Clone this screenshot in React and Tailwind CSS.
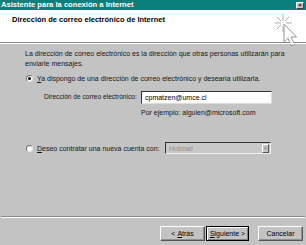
import React from "react";

function WizardIcon() {
  return (
    <svg width="26" height="38" viewBox="0 0 26 38" className="overflow-visible">
      {/* sparkle */}
      <g stroke="#9a9a9a" strokeWidth="0.8">
        <line x1="9" y1="1" x2="9" y2="8" />
        <line x1="9" y1="13" x2="9" y2="19" />
        <line x1="1" y1="10" x2="7" y2="10" />
        <line x1="12" y1="10" x2="18" y2="10" />
        <line x1="3" y1="4" x2="7" y2="8" />
        <line x1="15" y1="4" x2="11" y2="8" />
        <line x1="3" y1="16" x2="7" y2="12" />
      </g>
      {/* arrow cursor */}
      <path
        d="M10 11 L10 29 L14 25 L17.5 33 L20.5 31.5 L17 24 L22.5 24 Z"
        fill="#ffffff"
        stroke="#8a8a8a"
        strokeWidth="0.9"
        strokeLinejoin="miter"
      />
    </svg>
  );
}

function Radio({ checked }) {
  return (
    <span className="relative w-[7px] h-[7px] rounded-full bg-white border border-t-[#707070] border-l-[#707070] border-r-[#e8e8e8] border-b-[#e8e8e8] flex items-center justify-center shrink-0">
      {checked && <span className="w-[3px] h-[3px] rounded-full bg-black" />}
    </span>
  );
}

function Button({ children, isDefault }) {
  return (
    <div
      className={`h-[15px] flex items-center justify-center text-[7px] text-black bg-[#c3c3c3] ${
        isDefault
          ? "border border-black shadow-[inset_1px_1px_0_#fff,inset_-1px_-1px_0_#808080]"
          : "border border-t-white border-l-white border-r-[#555] border-b-[#555] shadow-[inset_-1px_-1px_0_#909090]"
      }`}
    >
      {children}
    </div>
  );
}

export default function App() {
  return (
    <div className="w-[306px] h-[245px] bg-[#c3c3c3] flex flex-col overflow-hidden font-['Liberation_Sans',Arial,sans-serif] leading-none select-none">
      {/* title bar */}
      <div className="h-[10px] bg-[#0a7f7c] flex items-center justify-between pl-[1px] pr-[2px]">
        <span className="text-white font-bold text-[7.6px]">
          Asistente para la conexión a Internet
        </span>
        <span className="w-[8px] h-[7px] bg-[#c3c3c3] border-t border-l border-white border-r border-b border-r-[#444] border-b-[#444] flex items-center justify-center text-[6px] font-bold text-black">
          ×
        </span>
      </div>

      {/* header */}
      <div className="h-[33px] bg-white flex items-start justify-between pl-[12px] pr-[6px] border-b border-[#8a8a8a]">
        <span className="mt-[6px] font-bold text-[7.5px] text-black">
          Dirección de correo electrónico de Internet
        </span>
        <div className="mt-[3px]">
          <WizardIcon />
        </div>
      </div>
      <div className="h-px bg-white" />

      {/* body */}
      <div className="flex-1 flex flex-col pl-[25px] pr-[6px] text-[7px] text-[#151515]">
        <p className="mt-[5px] leading-[10px] whitespace-nowrap">
          La dirección de correo electrónico es la dirección que otras personas utilizarán para
          <br />
          enviarle mensajes.
        </p>

        <div className="mt-[6px] flex items-center gap-[4px] pl-[1px] whitespace-nowrap">
          <Radio checked />
          <span>
            <span className="underline">Y</span>a dispongo de una dirección de correo electrónico y desearía utilizarla.
          </span>
        </div>

        <div className="mt-[9px] flex items-center">
          <span className="w-[116px] pl-[19px] text-[6.6px] whitespace-nowrap">Dirección de correo electrónico:</span>
          <div className="w-[131px] h-[13px] bg-white flex items-center pl-[3px] border border-t-[#333] border-l-[#333] border-r-[#dcdcdc] border-b-[#dcdcdc] text-black">
            cpmatzen@umce.cl
          </div>
        </div>

        <div className="mt-[5px] pl-[116px] whitespace-nowrap">Por ejemplo: alguien@microsoft.com</div>

        <div className="mt-[26px] flex items-center">
          <div className="w-[140px] flex items-center gap-[4px] pl-[1px] whitespace-nowrap">
            <Radio />
            <span>
              <span className="underline">D</span>eseo contratar una nueva cuenta con:
            </span>
          </div>
          <div className="w-[106px] h-[12px] bg-[#c8c8c8] flex items-center justify-between pl-[3px] pr-[1px] border border-t-[#333] border-l-[#333] border-r-[#eee] border-b-[#eee] text-[#8f8f8f]">
            <span>Hotmail</span>
            <span className="w-[7px] h-[9px] bg-[#c3c3c3] border border-t-white border-l-white border-r-[#555] border-b-[#555] flex items-center justify-center text-[5px] text-[#888]">
              ▾
            </span>
          </div>
        </div>
      </div>

      {/* separator */}
      <div className="mx-[1px] h-px bg-[#8a8a8a]" />
      <div className="mx-[1px] h-px bg-white" />

      {/* buttons */}
      <div className="h-[27px] flex items-start justify-end pt-[8px] pr-[3px]">
        <div className="w-[45px]">
          <Button>
            &lt; <span className="underline ml-[2px]">A</span>trás
          </Button>
        </div>
        <div className="w-[43px] ml-[1px]">
          <Button isDefault>
            <span className="underline">S</span>iguiente &gt;
          </Button>
        </div>
        <div className="w-[45px] ml-[9px]">
          <Button>Cancelar</Button>
        </div>
      </div>
    </div>
  );
}
